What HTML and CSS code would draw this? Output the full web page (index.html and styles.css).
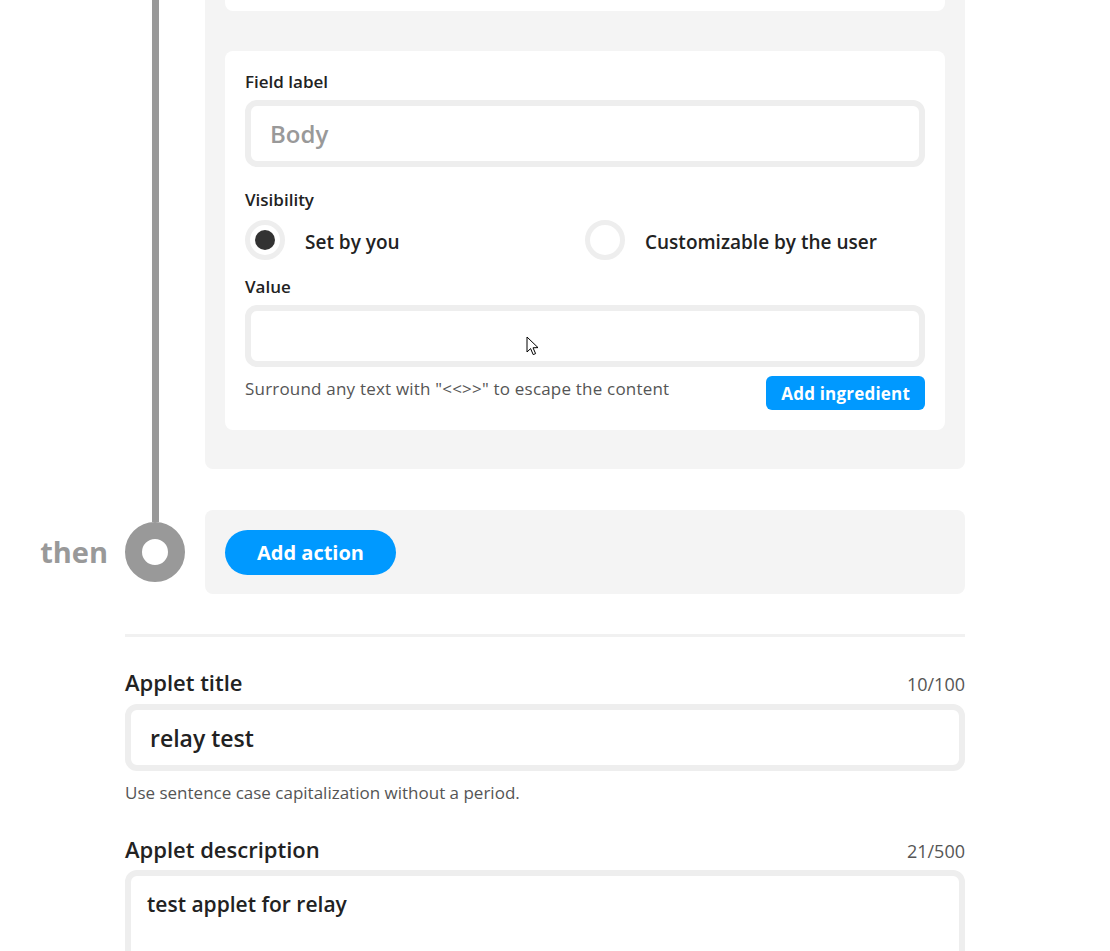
FILE: index.html
```html
<!DOCTYPE html>
<html lang="en">
<head>
<meta charset="utf-8">
<title>Applet editor</title>
<link rel="stylesheet" href="styles.css">
</head>
<body>
<div class="page">
  <div class="step">
    <div class="step-label"></div>
    <div class="step-rail"><div class="rail-line"></div></div>
    <div class="step-body">
      <div class="panel panel--open">
        <div class="card card--clipped"></div>
        <div class="card">
          <div class="field-label">Field label</div>
          <div class="input input--tall"><span class="placeholder">Body</span></div>

          <div class="field-label field-label--spaced">Visibility</div>
          <div class="radios">
            <div class="radio radio--checked"><span class="radio-dot"></span><span class="radio-text">Set by you</span></div>
            <div class="radio"><span class="radio-dot"></span><span class="radio-text">Customizable by the user</span></div>
          </div>

          <div class="field-label field-label--value">Value</div>
          <div class="input input--value">
            <svg class="cursor" width="13" height="21" viewBox="0 0 13 21" aria-hidden="true"><path d="M1 1 L1 16 L4.6 12.6 L7.2 18.6 L9.6 17.6 L7 11.8 L12 11.6 Z" fill="#fff" stroke="#000" stroke-width="1" stroke-linejoin="round"/></svg>
          </div>
          <div class="helper-row">
            <span class="helper">Surround any text with "&lt;&lt;&gt;&gt;" to escape the content</span>
            <button class="btn-small">Add ingredient</button>
          </div>
        </div>
      </div>
    </div>
  </div>

  <div class="step step--then">
    <div class="step-label"><span class="then">then</span></div>
    <div class="step-rail step-rail--node">
      <div class="rail-seg"></div>
      <div class="node"></div>
      <div class="rail-spacer"></div>
    </div>
    <div class="step-body">
      <div class="panel panel--action">
        <button class="btn-pill">Add action</button>
      </div>
    </div>
  </div>

  <div class="form">
    <hr class="divider">
    <div class="form-head">
      <span class="form-title">Applet title</span>
      <span class="counter">10/100</span>
    </div>
    <div class="input input--title"><span class="value-text">relay test</span></div>
    <p class="form-help">Use sentence case capitalization without a period.</p>

    <div class="form-head form-head--desc">
      <span class="form-title">Applet description</span>
      <span class="counter">21/500</span>
    </div>
    <div class="input input--desc"><span class="value-text value-text--desc">test applet for relay</span></div>
  </div>
</div>
</body>
</html>
```

FILE: styles.css
```css
* { box-sizing: border-box; }
html, body { margin: 0; padding: 0; background: #fff; }
body {
  font-family: "Open Sans", Lato, "Liberation Sans", sans-serif;
  color: #222;
  overflow: hidden;
}
.page { width: 965px; }

.step { display: flex; }
.step-label {
  width: 125px;
  padding-right: 17px;
  display: flex;
  align-items: center;
  justify-content: flex-end;
}
.step-rail {
  width: 60px;
  display: flex;
  justify-content: center;
}
.rail-line { width: 7px; background: #999; }
.step-body { width: 760px; margin-left: 20px; }

.panel {
  background: #f4f4f4;
  border-radius: 8px;
}
.panel--open {
  border-top-left-radius: 0;
  border-top-right-radius: 0;
  padding: 0 20px 39px;
  margin-bottom: 41px;
}
.card {
  background: #fff;
  border-radius: 8px;
  padding: 20px 20px 20px;
}
.card--clipped {
  height: 11px;
  padding: 0;
  border-top-left-radius: 0;
  border-top-right-radius: 0;
  margin-bottom: 40px;
}

.field-label {
  font-size: 17px;
  font-weight: 600;
  line-height: 22px;
  height: 22px;
  margin-top: 0;
}
.field-label--spaced { margin-top: 22px; }
.field-label--value { margin-top: 16px; }

.input {
  border: 6px solid #eee;
  border-radius: 12px;
  background: #fff;
  display: flex;
  align-items: center;
}
.input--tall { height: 67px; margin-top: 7px; padding-left: 19px; }
.input--value { height: 62px; margin-top: 7px; position: relative; }
.placeholder { font-size: 24px; font-weight: 600; color: #999; }

.cursor { position: absolute; left: 275px; top: 25px; }

.radios {
  display: flex;
  margin-top: 9px;
  height: 40px;
}
.radio {
  width: 340px;
  display: flex;
  align-items: center;
}
.radio-dot {
  width: 40px;
  height: 40px;
  border-radius: 50%;
  border: 5px solid #eee;
  background: #fff;
  display: flex;
  align-items: center;
  justify-content: center;
  margin-right: 20px;
}
.radio--checked .radio-dot::after {
  content: "";
  width: 20px;
  height: 20px;
  border-radius: 50%;
  background: #333;
}
.radio-text { font-size: 19px; font-weight: 600; padding-top: 3px; }

.helper-row {
  display: flex;
  justify-content: space-between;
  align-items: flex-start;
  margin-top: 9px;
}
.helper { font-size: 17px; letter-spacing: 0.2px; color: #555; line-height: 22px; margin-top: 2px; }
.btn-small {
  height: 34px;
  padding: 0 15px;
  border: 0;
  border-radius: 6px;
  background: #0099ff;
  color: #fff;
  font-family: inherit;
  font-size: 17px;
  font-weight: 700;
  letter-spacing: 0.2px;
}

.step--then { height: 84px; }
.step-rail--node { flex-direction: column; align-items: center; }
.rail-seg { width: 7px; height: 12px; background: #999; }
.rail-spacer { flex: 1; }
.node {
  width: 60px;
  height: 60px;
  border-radius: 50%;
  border: 17px solid #999;
  background: #fff;
}
.then {
  font-size: 29px;
  font-weight: 700;
  color: #999;
  line-height: 1;
  margin-top: -2px;
}
.panel--action {
  height: 84px;
  padding: 20px;
  display: flex;
  align-items: center;
}
.btn-pill {
  height: 45px;
  width: 171px;
  border: 0;
  border-radius: 23px;
  background: #0099ff;
  color: #fff;
  font-family: inherit;
  font-size: 20px;
  font-weight: 700;
}

.form { margin-left: 125px; width: 840px; }
.divider {
  border: 0;
  height: 3px;
  background: #f1f1f1;
  margin: 40px 0 0;
}
.form-head {
  display: flex;
  justify-content: space-between;
  align-items: baseline;
  margin-top: 31px;
  height: 28px;
}
.form-head--desc { margin-top: 32px; }
.form-title { font-size: 22px; font-weight: 600; line-height: 28px; }
.counter { font-size: 18px; color: #555; }
.input--title { height: 67px; margin-top: 8px; padding-left: 19px; }
.value-text { font-size: 23px; font-weight: 600; color: #222; }
.form-help { font-size: 17px; color: #555; margin: 12px 0 0; line-height: 20px; }
.input--desc {
  height: 120px;
  margin-top: 7px;
  align-items: flex-start;
  padding: 14px 16px;
}
.value-text--desc { font-size: 21px; }
```
